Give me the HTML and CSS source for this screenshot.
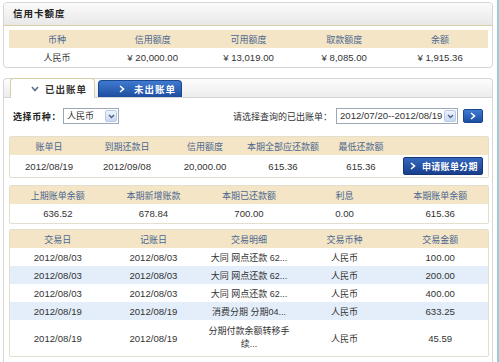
FILE: index.html
```html
<!DOCTYPE html>
<html lang="zh-CN">
<head>
<meta charset="utf-8">
<title>信用卡额度</title>
<link rel="stylesheet" href="styles.css">
</head>
<body>
<div class="page">
  <section class="panel">
    <div class="panel-title">信用卡额度</div>
    <div class="panel-body limit-body">
      <table class="grid">
        <tr class="head"><th>币种</th><th>信用额度</th><th>可用额度</th><th>取款额度</th><th>余额</th></tr>
        <tr><td>人民币</td><td class="num">¥ 20,000.00</td><td class="num">¥ 13,019.00</td><td class="num">¥ 8,085.00</td><td class="num">¥ 1,915.36</td></tr>
      </table>
    </div>
  </section>

  <section class="panel bill-panel">
    <div class="tabs">
      <div class="tab tab-active">
        <svg class="ico" width="8" height="6" viewBox="0 0 8 6"><polyline points="1,1 4,4.5 7,1" fill="none" stroke="#5a6f8c" stroke-width="1.6"/></svg>
        <span>已出账单</span>
      </div>
      <div class="tab tab-blue">
        <svg class="ico" width="6" height="8" viewBox="0 0 6 8"><polyline points="1,1 4.5,4 1,7" fill="none" stroke="#fff" stroke-width="1.6"/></svg>
        <span>未出账单</span>
      </div>
    </div>
    <div class="panel-body bill-body">
      <div class="filter">
        <span class="label-bold">选择币种：</span>
        <div class="select sel-cur">
          <span class="select-text">人民币</span>
          <span class="select-arrow"><svg width="7" height="5" viewBox="0 0 7 5"><polyline points="1,1 3.5,3.5 6,1" fill="none" stroke="#4d6185" stroke-width="1.4"/></svg></span>
        </div>
        <span class="label-plain">请选择查询的已出账单：</span>
        <div class="select sel-period">
          <span class="select-text num">2012/07/20--2012/08/19</span>
          <span class="select-arrow"><svg width="7" height="5" viewBox="0 0 7 5"><polyline points="1,1 3.5,3.5 6,1" fill="none" stroke="#4d6185" stroke-width="1.4"/></svg></span>
        </div>
        <div class="go-btn"><svg width="6" height="8" viewBox="0 0 6 8"><polyline points="1,1 4.5,4 1,7" fill="none" stroke="#fff" stroke-width="1.6"/></svg></div>
      </div>

      <div class="box box-summary">
        <table class="grid grid6">
          <colgroup><col><col><col><col><col><col class="wide"></colgroup>
          <tr class="head"><th>账单日</th><th>到期还款日</th><th>信用额度</th><th>本期全部应还款额</th><th>最低还款额</th><th></th></tr>
          <tr class="tall"><td class="num">2012/08/19</td><td class="num">2012/09/08</td><td class="num">20,000.00</td><td class="num">615.36</td><td class="num">615.36</td>
            <td><div class="apply-btn"><svg width="6" height="8" viewBox="0 0 6 8"><polyline points="1,1 4.5,4 1,7" fill="none" stroke="#fff" stroke-width="1.6"/></svg><span>申请账单分期</span></div></td></tr>
        </table>
      </div>

      <div class="box box-balance">
        <table class="grid">
          <tr class="head"><th>上期账单余额</th><th>本期新增账款</th><th>本期已还款额</th><th>利息</th><th>本期账单余额</th></tr>
          <tr class="r19"><td class="num">636.52</td><td class="num">678.84</td><td class="num">700.00</td><td class="num">0.00</td><td class="num">615.36</td></tr>
        </table>
      </div>

      <div class="box box-tx">
        <table class="grid">
          <tr class="head"><th>交易日</th><th>记账日</th><th>交易明细</th><th>交易币种</th><th>交易金额</th></tr>
          <tr><td class="num">2012/08/03</td><td class="num">2012/08/03</td><td>大同 网点还款 62...</td><td>人民币</td><td class="num">100.00</td></tr>
          <tr class="alt"><td class="num">2012/08/03</td><td class="num">2012/08/03</td><td>大同 网点还款 62...</td><td>人民币</td><td class="num">200.00</td></tr>
          <tr><td class="num">2012/08/03</td><td class="num">2012/08/03</td><td>大同 网点还款 62...</td><td>人民币</td><td class="num">400.00</td></tr>
          <tr class="alt"><td class="num">2012/08/19</td><td class="num">2012/08/19</td><td>消费分期 分期04...</td><td>人民币</td><td class="num">633.25</td></tr>
          <tr class="double"><td class="num">2012/08/19</td><td class="num">2012/08/19</td><td class="wrap">分期付款余额转移手续...</td><td>人民币</td><td class="num">45.59</td></tr>
        </table>
      </div>
    </div>
  </section>
</div>
</body>
</html>
```

FILE: styles.css
```css
* { box-sizing: border-box; }
html, body { margin: 0; padding: 0; background: #fff; }
body {
  font-family: "Liberation Sans", "Noto Sans CJK SC", sans-serif;
  font-size: 9px;
  color: #333;
}
.page {
  width: 499px;
  min-height: 362px;
  padding: 2px 6px 0 3px;
  border-right: 2px solid #93cfdc;
}
.panel {
  width: 490px;
  border: 1px solid #d6d6d6;
  border-radius: 4px;
  background: #fff;
}
.panel-title {
  height: 23px;
  line-height: 22px;
  padding-left: 9px;
  font-weight: bold;
  letter-spacing: 1px;
  font-size: 9.5px;
  color: #222;
  background: linear-gradient(#fbfbfb, #e8e8e8);
  border-bottom: 1px solid #d8cfa6;
  border-radius: 4px 4px 0 0;
}
.limit-body { padding: 4px 4px 1px 5px; }
.grid {
  width: 100%;
  border-collapse: collapse;
  table-layout: fixed;
}
.grid th, .grid td {
  height: 18px;
  padding: 0 3px;
  text-align: center;
  vertical-align: middle;
  white-space: nowrap;
  overflow: hidden;
}
.grid .head th {
  background: #f3e5c6;
  color: #4b6791;
  font-weight: normal;
}
.num { font-size: 9.6px; }
.grid tr.alt td { background: #e3eefa; }
.grid tr.tall td { height: 22px; }
.grid tr.r19 td { height: 19px; }
.grid tr.double td { height: 36px; }
.grid td.wrap { white-space: normal; line-height: 13px; padding: 0 4px; }

.bill-panel {
  margin-top: 10px;
  border-radius: 4px 4px 0 0;
  border-bottom: none;
  padding-bottom: 8px;
}
.tabs {
  height: 19px;
  display: flex;
  align-items: flex-end;
  padding-left: 6px;
  background: linear-gradient(#fdfdfd, #ececec);
  border-bottom: 1px solid #d6d6d6;
  border-radius: 4px 4px 0 0;
}
.tab {
  display: flex;
  align-items: center;
  font-weight: bold;
  letter-spacing: 1px;
  font-size: 9.5px;
  border-radius: 4px 4px 0 0;
  white-space: nowrap;
}
.tab-active {
  width: 85px;
  height: 20px;
  margin-bottom: -1px;
  padding-left: 20px;
  background: #fff;
  border: 1px solid #d9cea6;
  border-bottom: none;
  color: #333;
}
.tab-active .ico { margin-right: 6px; }
.tab-blue {
  width: 84px;
  height: 17px;
  margin-left: 3px;
  padding-left: 20px;
  background: linear-gradient(#3f7ad0, #1d4d9e);
  border: 1px solid #1b4690;
  border-bottom: none;
  color: #fff;
}
.tab-blue .ico { margin-right: 9px; }

.bill-body { padding: 10px 4px 0 5px; }
.filter {
  height: 16px;
  display: flex;
  align-items: center;
  padding-left: 4px;
}
.filter > * { flex-shrink: 0; }
.label-bold {
  font-weight: bold;
  letter-spacing: 0.6px;
  font-size: 9px;
  color: #222;
  white-space: nowrap;
  margin-right: 2px;
}
.label-plain {
  margin-left: 114px;
  margin-right: 4px;
  white-space: nowrap;
  color: #333;
}
.select {
  display: flex;
  align-items: stretch;
  height: 16px;
  border: 1px solid #9ca7b8;
  background: #fff;
}
.sel-cur { width: 56px; }
.sel-period { width: 122px; }
.select-text {
  flex: 1;
  padding-left: 3px;
  line-height: 14px;
  white-space: nowrap;
  overflow: hidden;
}
.select-arrow {
  width: 12px;
  margin: 1px;
  display: flex;
  align-items: center;
  justify-content: center;
  background: linear-gradient(#eef3fd, #c9d7f2);
  border: 1px solid #b9c9e8;
  border-radius: 2px;
}
.go-btn {
  width: 20px;
  height: 14px;
  margin-left: 5px;
  display: flex;
  align-items: center;
  justify-content: center;
  background: linear-gradient(#3e7bd4, #1c4ea3);
  border: 1px solid #1a4691;
  border-radius: 2px;
}

.box {
  width: 480px;
  border: 1px solid #e4decf;
  border-radius: 2px;
}
.box-summary { margin-top: 12px; }
.box-balance { margin-top: 7px; }
.box-tx { margin-top: 5px; }
.grid6 col.wide { width: 88px; }
.grid6 td:last-child { padding: 0 5px 0 3px; }
.apply-btn {
  width: 80px;
  height: 18px;
  display: flex;
  align-items: center;
  padding-left: 6px;
  gap: 6px;
  color: #fff;
  font-weight: bold;
  font-size: 9px;
  letter-spacing: 0.3px;
  background: linear-gradient(#3468be, #183f8c);
  border: 1px solid #143576;
  border-radius: 2px;
}
```
